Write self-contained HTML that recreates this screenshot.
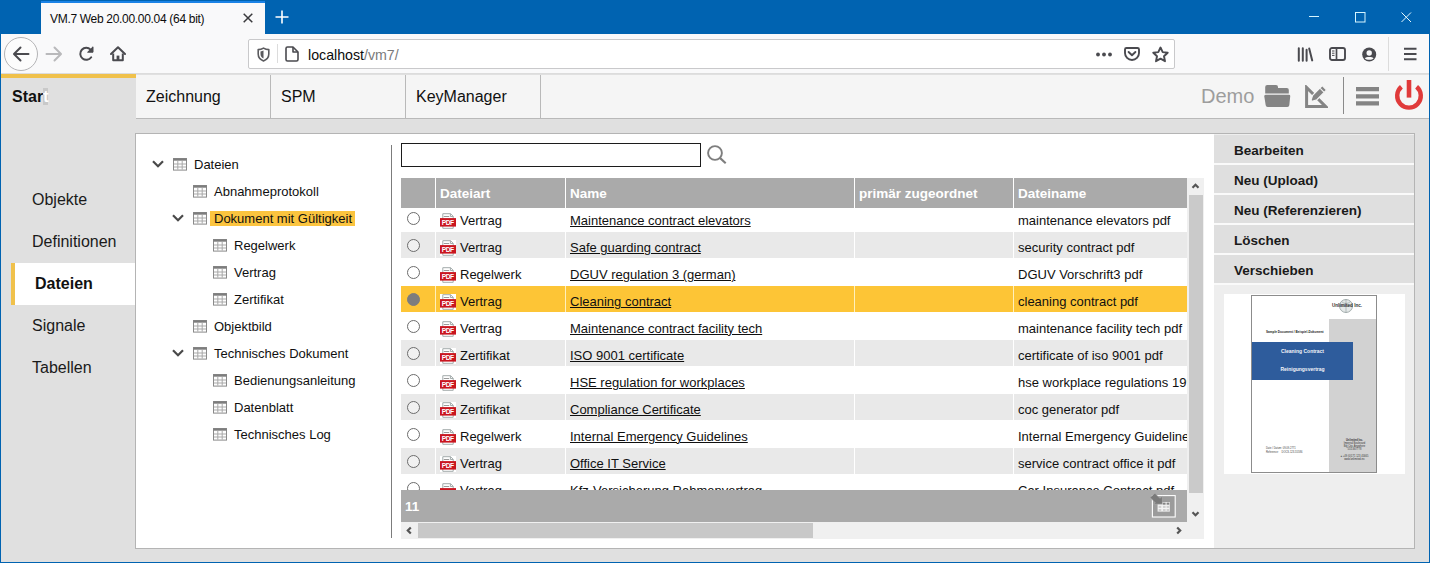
<!DOCTYPE html>
<html lang="de">
<head>
<meta charset="utf-8">
<title>VM.7 Web 20.00.00.04 (64 bit)</title>
<style>
*{box-sizing:border-box;margin:0;padding:0}
html,body{width:1430px;height:563px;overflow:hidden;background:#e0e0e0;font-family:"Liberation Sans",sans-serif;color:#111}
.abs{position:absolute}
svg{display:block}
#win{position:absolute;left:0;top:0;width:1430px;height:563px;background:#e0e0e0;overflow:hidden}
/* browser chrome */
#titlebar{position:absolute;left:0;top:0;width:1430px;height:34px;background:#0063b1}
#btab{position:absolute;left:41px;top:1px;width:224px;height:33px;background:#f9f9fa;border-top:2px solid #1b83e6}
#btab .t{position:absolute;left:9px;top:8px;font-size:12px;line-height:16px;color:#0c0c0d;white-space:nowrap;letter-spacing:-0.31px}
#navbar{position:absolute;left:1px;top:33.500px;width:1428px;height:40.500px;background:#f9f9fa;border-bottom:1px solid #dcdcdc}
#urlbar{position:absolute;left:248px;top:39px;width:927px;height:30px;background:#fff;border:1px solid #c9c9cb;border-radius:2px}
#urlbar .u{position:absolute;left:59px;top:7px;font-size:14.2px;line-height:16px;color:#0c0c0d;white-space:nowrap}
#urlbar .u span{color:#7a7a7b}
#backc{position:absolute;left:4px;top:37px;width:34px;height:34px;border-radius:50%;border:1px solid #b4b4b6;background:#fcfcfc}
/* app */
#apphead{position:absolute;left:1px;top:75px;width:1428px;height:44px;background:#f5f5f5;border-bottom:1px solid #b9b9b9}
.mtab{position:absolute;top:0;height:43px;width:136px;border-right:1px solid #b9b9b9;font-size:16px;line-height:43px;padding-left:11px;color:#111}
#start{position:absolute;left:1px;top:74px;width:135px;height:60px;background:#e0e0e0;border-top:4px solid #f0c14b;font-size:16px;font-weight:bold;padding-left:11px;line-height:37px}
#start i{font-style:normal;color:#fff;background:#c9c9c9}
#demo{position:absolute;left:1201px;top:84px;font-size:20px;line-height:24px;color:#9d9d9d}
#side .it{position:absolute;left:32px;font-size:16px;line-height:20px;color:#1a1a1a;white-space:nowrap}
#sel{position:absolute;left:11px;top:263px;width:125px;height:42px;background:#fff;border-left:4px solid #f0c14b}
#panel{position:absolute;left:135px;top:133px;width:1280px;height:416px;background:#fff;border:1px solid #b4b4b4}
.tr{position:absolute;font-size:13px;line-height:18px;white-space:nowrap;color:#101010}
#vsep{position:absolute;left:391px;top:145px;width:1px;height:393px;background:#7c7c7c}
#search{position:absolute;left:401px;top:143px;width:300px;height:24px;border:1px solid #1c1c1c;background:#fff}
/* table */
#grid{position:absolute;left:401px;top:178px;width:786px;height:313px;overflow:hidden;background:#fff}
#ghead{position:absolute;left:0;top:0;width:786px;height:30px;background:#aaa;z-index:2}
#ghead div{position:absolute;top:0;height:30px;border-left:1px solid #fff;color:#fff;font-weight:bold;font-size:13.5px;line-height:32px;padding-left:4px;white-space:nowrap}
.row{position:absolute;left:0;width:786px;height:26px;background:#fff;font-size:13px;color:#101010}
.row.alt{background:#e9e9e9}
.row.selr{background:#fdc536}
.c{position:absolute;top:0;height:26px;line-height:32px;white-space:nowrap;overflow:hidden;border-left:1px solid #fff;padding-left:4px}
.c0{left:0;width:34px;border-left:0}
.c1{left:34px;width:130px}
.c2{left:164px;width:289px}
.c3{left:453px;width:159px}
.c4{left:612px;width:174px}
.c u{text-decoration:underline;text-decoration-thickness:1px;text-underline-offset:0.7px}
.pdf{position:absolute;left:4px;top:8px}
.ta{position:absolute;left:24px;top:0}
.rad{position:absolute;left:6px;top:7px;width:13px;height:13px;border-radius:50%;border:1.8px solid #6c6c6c;background:#fff}
.alt .rad{background:#f1f1f1}
.rad.on{background:#7d7d7d;border-color:#7d7d7d}
.selr .c{border-left-color:#fff0bd}
#gfoot{position:absolute;left:401px;top:490px;width:786px;height:32px;background:#aaa;color:#fff;font-weight:bold;font-size:13.5px;line-height:34px;padding-left:4px}
#vscroll{position:absolute;left:1187px;top:178px;width:17px;height:361px;background:#f0f0f0}
#vthumb{position:absolute;left:1.5px;top:17px;width:14.5px;height:298px;background:#cacaca}
#hscroll{position:absolute;left:401px;top:522px;width:786px;height:17px;background:#f0f0f0}
#hthumb{position:absolute;left:17px;top:1px;width:395px;height:15px;background:#c8c8c8}
/* right */
#rp{position:absolute;left:1214px;top:134px;width:200px;height:414px;background:#eee}
.btn{position:absolute;left:0;width:200px;height:28px;background:#dfdfdf;font-size:13.5px;font-weight:bold;line-height:31px;padding-left:20px;color:#1a1a1a;white-space:nowrap}
.gap{position:absolute;left:0;width:200px;height:2px;background:#fafafa}
#prev{position:absolute;left:10px;top:160px;width:181px;height:180px;background:#fff}
#doc{position:absolute;left:27px;top:0.5px;width:126px;height:178.500px;border:1px solid #8c8c8c;background:#fff;overflow:hidden;font-family:"Liberation Sans",sans-serif}
#doc div{position:absolute;white-space:nowrap}
</style>
</head>
<body>
<div id="win">
  <div id="titlebar">
    <svg class="abs" style="left:275px;top:10px" width="14" height="14" viewBox="0 0 14 14"><path d="M7 0.5V13.5M0.5 7H13.5" stroke="#fff" stroke-width="1.6" fill="none"/></svg>
    <svg class="abs" style="left:1309px;top:16px" width="11" height="2" viewBox="0 0 11 2"><path d="M0 0.5H10" stroke="#d5f5ff" stroke-width="1"/></svg>
    <svg class="abs" style="left:1355px;top:12px" width="11" height="11" viewBox="0 0 11 11"><rect x="0.5" y="0.5" width="9.5" height="9.5" fill="none" stroke="#d5f5ff" stroke-width="1"/></svg>
    <svg class="abs" style="left:1401px;top:12px" width="11" height="11" viewBox="0 0 11 11"><path d="M0.5 0.5L10 10M10 0.5L0.5 10" fill="none" stroke="#e6faff" stroke-width="1"/></svg>
  </div>
  <div id="btab"><div class="t">VM.7 Web 20.00.00.04 (64 bit)</div>
    <svg class="abs" style="left:202px;top:10px" width="10" height="10" viewBox="0 0 10 10"><path d="M0.7 0.7L9.3 9.3M9.3 0.7L0.7 9.3" stroke="#3a3a3d" stroke-width="1.5" fill="none"/></svg>
  </div>
  <div id="navbar"></div>
  <div id="backc"></div>
  <!-- back -->
  <svg class="abs" style="left:12px;top:46px" width="18" height="16" viewBox="0 0 18 16"><path d="M16.5 8H2.5M8.5 1.5L2 8L8.5 14.5" fill="none" stroke="#4a4a4f" stroke-width="2" stroke-linecap="round" stroke-linejoin="round"/></svg>
  <!-- forward -->
  <svg class="abs" style="left:45px;top:46px" width="18" height="16" viewBox="0 0 18 16"><path d="M1.5 8H15.5M9.5 1.5L16 8L9.5 14.5" fill="none" stroke="#b9b9bb" stroke-width="2" stroke-linecap="round" stroke-linejoin="round"/></svg>
  <!-- reload -->
  <svg class="abs" style="left:78px;top:46px" width="17" height="16" viewBox="0 0 17 16"><path d="M13.2 11.2A6 6 0 1 1 12.6 3.6" fill="none" stroke="#4a4a4f" stroke-width="2" stroke-linecap="round"/><path d="M15 0.8V6.2H9.6Z" fill="#4a4a4f" stroke="#4a4a4f" stroke-width="1" stroke-linejoin="round"/></svg>
  <!-- home -->
  <svg class="abs" style="left:110px;top:46px" width="16" height="16" viewBox="0 0 16 16"><path d="M1 8L8 1.2L15 8" fill="none" stroke="#4a4a4f" stroke-width="2" stroke-linecap="round" stroke-linejoin="round"/><path d="M3.2 7.5V14.2H12.8V7.5" fill="none" stroke="#4a4a4f" stroke-width="2" stroke-linejoin="round"/><rect x="6.6" y="9.6" width="2.8" height="4.4" fill="#4a4a4f"/></svg>
  <div id="urlbar"><div class="u">localhost<span>/vm7/</span></div>
    <!-- shield -->
    <svg class="abs" style="left:8px;top:7px" width="13" height="15" viewBox="0 0 13 15"><path d="M1.200 2.600C3.600 2.600 5.200 1.900 6.500 1.100C7.800 1.900 9.400 2.600 11.800 2.600V7C11.800 10.400 9.400 12.800 6.500 13.900C3.600 12.800 1.200 10.400 1.200 7Z" fill="none" stroke="#5a5a5e" stroke-width="1.600" stroke-linejoin="round"/><path d="M6.500 3.600V11.600C4.600 10.700 3.500 9.100 3.500 7V4.500C4.700 4.400 5.700 4.100 6.500 3.600Z" fill="#5a5a5e"/></svg>
    <div class="abs" style="left:28px;top:4px;width:1px;height:19px;background:#dcdcdc"></div>
    <!-- page -->
    <svg class="abs" style="left:36px;top:6px" width="14" height="16" viewBox="0 0 14 16"><path d="M2.5 1H8L13 6V13.5A1.5 1.5 0 0 1 11.5 15H2.5A1.5 1.5 0 0 1 1 13.5V2.5A1.5 1.5 0 0 1 2.500 1Z" fill="none" stroke="#4a4a4f" stroke-width="1.6" stroke-linejoin="round"/><path d="M8 1V6H13" fill="none" stroke="#4a4a4f" stroke-width="1.6" stroke-linejoin="round"/></svg>
    <!-- dots -->
    <svg class="abs" style="left:847px;top:11.500px" width="16" height="5" viewBox="0 0 16 5"><circle cx="2" cy="2.500" r="1.900" fill="#4a4a4f"/><circle cx="8" cy="2.500" r="1.900" fill="#4a4a4f"/><circle cx="14" cy="2.500" r="1.900" fill="#4a4a4f"/></svg>
    <!-- pocket -->
    <svg class="abs" style="left:875px;top:7px" width="16" height="14" viewBox="0 0 16 14"><path d="M2.500 1H13.500A1.500 1.500 0 0 1 15 2.500V6A7 7 0 0 1 1 6V2.500A1.500 1.500 0 0 1 2.500 1Z" fill="none" stroke="#4a4a4f" stroke-width="1.900"/><path d="M4.600 5L8 8.300L11.400 5" fill="none" stroke="#4a4a4f" stroke-width="1.900" stroke-linecap="round" stroke-linejoin="round"/></svg>
    <!-- star -->
    <svg class="abs" style="left:902.500px;top:5.500px" width="17" height="17" viewBox="0 0 17 17"><path d="M8.500 1.500L10.700 6.100L15.700 6.700L12 10.200L13 15.200L8.500 12.700L4 15.200L5 10.200L1.300 6.700L6.300 6.100Z" fill="none" stroke="#4a4a4f" stroke-width="1.900" stroke-linejoin="round"/></svg>
  </div>
  <!-- library -->
  <svg class="abs" style="left:1297px;top:47px" width="17" height="15" viewBox="0 0 17 15"><path d="M1.800 1.200V13.800M5.800 1.200V13.800M9.600 2.800V13.800M12.200 1.400L15.200 13.400" fill="none" stroke="#4a4a4f" stroke-width="2" stroke-linecap="round"/></svg>
  <!-- sidebar -->
  <svg class="abs" style="left:1329px;top:47px" width="17" height="14" viewBox="0 0 17 14"><rect x="1" y="1" width="15" height="12" rx="2" fill="none" stroke="#4a4a4f" stroke-width="1.900"/><path d="M7.500 1V13" stroke="#4a4a4f" stroke-width="1.700"/><path d="M3 4H5.500M3 6.200H5.500M3 8.400H5.500" stroke="#4a4a4f" stroke-width="1"/></svg>
  <!-- account -->
  <svg class="abs" style="left:1362px;top:47px" width="15" height="15" viewBox="0 0 15 15"><circle cx="7.200" cy="7.500" r="7" fill="#4a4a4f"/><circle cx="7.200" cy="6" r="2.700" fill="#f9f9fa"/><path d="M2.800 11.300C4 9.500 10.400 9.500 11.600 11.300C10 13.300 4.400 13.300 2.800 11.300Z" fill="#f9f9fa"/></svg>
  <div class="abs" style="left:1388px;top:37px;width:1px;height:34px;background:#dcdcdc"></div>
  <!-- browser hamburger -->
  <svg class="abs" style="left:1404px;top:47px" width="13" height="14" viewBox="0 0 13 14"><path d="M0 1.700H12.500M0 7H12.500M0 12.200H12.500" stroke="#4a4a4f" stroke-width="2"/></svg>

  <div id="apphead">
    <div class="mtab" style="left:134px">Zeichnung</div>
    <div class="mtab" style="left:269px">SPM</div>
    <div class="mtab" style="left:404px">KeyManager</div>
  </div>
  <div id="start">Star<i>t</i></div>
  <div id="demo">Demo</div>
  <!-- folder -->
  <svg class="abs" style="left:1264px;top:85px" width="27" height="23" viewBox="0 0 27 23"><path d="M1.200 2A2 2 0 0 1 3.200 0H12A2 2 0 0 1 14 2V3H22.800A2 2 0 0 1 24.800 5V8.600H1.200Z" fill="#848484"/><path d="M1.600 9.800H24.800A1.500 1.500 0 0 1 26.200 11.600L25.300 20.200A2 2 0 0 1 23.300 22H3.700A2 2 0 0 1 1.700 20.200L0.300 11.600A1.500 1.500 0 0 1 1.600 9.800Z" fill="#848484"/></svg>
  <!-- edit/measure -->
  <svg class="abs" style="left:1305px;top:85px" width="23" height="23" viewBox="0 0 23 23"><path d="M1.600 2.500V21.400H20.500Z" fill="none" stroke="#848484" stroke-width="3" stroke-linejoin="miter"/><path d="M6 15.200L7.600 10.400L17.300 0.700L21.600 5L11.900 14.700L7.100 16.300Z" fill="#848484" stroke="#f5f5f5" stroke-width="1.200"/><path d="M15.200 3.400L18.900 7.100" stroke="#f5f5f5" stroke-width="1.100"/></svg>
  <div class="abs" style="left:1343px;top:77px;width:1px;height:37px;background:#8a8a8a"></div>
  <!-- app hamburger -->
  <svg class="abs" style="left:1356px;top:87px" width="23" height="19" viewBox="0 0 23 19"><path d="M0 2.200H23M0 9.300H23M0 16.400H23" stroke="#848484" stroke-width="4.200"/></svg>
  <!-- power -->
  <svg class="abs" style="left:1394px;top:79px" width="30" height="32" viewBox="0 0 30 32"><path d="M7.400 7.800A11.800 11.800 0 1 0 22.600 7.800" fill="none" stroke="#e03a3a" stroke-width="4.400" stroke-linecap="butt"/><path d="M15 1V18.600" stroke="#e03a3a" stroke-width="4.600"/></svg>

  <div id="side">
    <div class="it" style="top:190px">Objekte</div>
    <div class="it" style="top:232px">Definitionen</div>
    <div id="sel"></div>
    <div class="it" style="top:274px;left:35px;font-weight:bold;color:#111">Dateien</div>
    <div class="it" style="top:316px">Signale</div>
    <div class="it" style="top:358px">Tabellen</div>
  </div>
  <div id="panel"></div>
<div class="abs" style="left:152px;top:160px"><svg class="ch" width="12" height="8" viewBox="0 0 12 8"><path d="M1 1.2L6 6.2L11 1.2" fill="none" stroke="#4a4a4a" stroke-width="2.200"/></svg></div><div class="abs" style="left:172.5px;top:157.5px"><svg class="ti" width="14" height="13" viewBox="0 0 14 13"><rect x="0.500" y="0.500" width="13" height="11.600" fill="#fdfdfd" stroke="#8a8a8a"/><rect x="0.500" y="0.500" width="13" height="2.200" fill="#7d7d7d"/><path d="M1 6H13M1 9H13M4.800 3V11.600M9.200 3V11.600" stroke="#a9a9a9" stroke-width="1" fill="none"/></svg></div><div class="tr" style="left:194px;top:155.5px">Dateien</div>
<div class="abs" style="left:192.5px;top:184.5px"><svg class="ti" width="14" height="13" viewBox="0 0 14 13"><rect x="0.500" y="0.500" width="13" height="11.600" fill="#fdfdfd" stroke="#8a8a8a"/><rect x="0.500" y="0.500" width="13" height="2.200" fill="#7d7d7d"/><path d="M1 6H13M1 9H13M4.800 3V11.600M9.200 3V11.600" stroke="#a9a9a9" stroke-width="1" fill="none"/></svg></div><div class="tr" style="left:214px;top:182.5px">Abnahmeprotokoll</div>
<div class="abs" style="left:172px;top:214px"><svg class="ch" width="12" height="8" viewBox="0 0 12 8"><path d="M1 1.2L6 6.2L11 1.2" fill="none" stroke="#4a4a4a" stroke-width="2.200"/></svg></div><div class="abs" style="left:192.5px;top:211.5px"><svg class="ti" width="14" height="13" viewBox="0 0 14 13"><rect x="0.500" y="0.500" width="13" height="11.600" fill="#fdfdfd" stroke="#8a8a8a"/><rect x="0.500" y="0.500" width="13" height="2.200" fill="#7d7d7d"/><path d="M1 6H13M1 9H13M4.800 3V11.600M9.200 3V11.600" stroke="#a9a9a9" stroke-width="1" fill="none"/></svg></div><div class="abs" style="left:210px;top:211px;width:145px;height:15px;background:#fbc43f"></div><div class="tr" style="left:214px;top:209.5px">Dokument mit Gültigkeit</div>
<div class="abs" style="left:212.5px;top:238.5px"><svg class="ti" width="14" height="13" viewBox="0 0 14 13"><rect x="0.500" y="0.500" width="13" height="11.600" fill="#fdfdfd" stroke="#8a8a8a"/><rect x="0.500" y="0.500" width="13" height="2.200" fill="#7d7d7d"/><path d="M1 6H13M1 9H13M4.800 3V11.600M9.200 3V11.600" stroke="#a9a9a9" stroke-width="1" fill="none"/></svg></div><div class="tr" style="left:234px;top:236.5px">Regelwerk</div>
<div class="abs" style="left:212.5px;top:265.5px"><svg class="ti" width="14" height="13" viewBox="0 0 14 13"><rect x="0.500" y="0.500" width="13" height="11.600" fill="#fdfdfd" stroke="#8a8a8a"/><rect x="0.500" y="0.500" width="13" height="2.200" fill="#7d7d7d"/><path d="M1 6H13M1 9H13M4.800 3V11.600M9.200 3V11.600" stroke="#a9a9a9" stroke-width="1" fill="none"/></svg></div><div class="tr" style="left:234px;top:263.5px">Vertrag</div>
<div class="abs" style="left:212.5px;top:292.5px"><svg class="ti" width="14" height="13" viewBox="0 0 14 13"><rect x="0.500" y="0.500" width="13" height="11.600" fill="#fdfdfd" stroke="#8a8a8a"/><rect x="0.500" y="0.500" width="13" height="2.200" fill="#7d7d7d"/><path d="M1 6H13M1 9H13M4.800 3V11.600M9.200 3V11.600" stroke="#a9a9a9" stroke-width="1" fill="none"/></svg></div><div class="tr" style="left:234px;top:290.5px">Zertifikat</div>
<div class="abs" style="left:192.5px;top:319.5px"><svg class="ti" width="14" height="13" viewBox="0 0 14 13"><rect x="0.500" y="0.500" width="13" height="11.600" fill="#fdfdfd" stroke="#8a8a8a"/><rect x="0.500" y="0.500" width="13" height="2.200" fill="#7d7d7d"/><path d="M1 6H13M1 9H13M4.800 3V11.600M9.200 3V11.600" stroke="#a9a9a9" stroke-width="1" fill="none"/></svg></div><div class="tr" style="left:214px;top:317.5px">Objektbild</div>
<div class="abs" style="left:172px;top:349px"><svg class="ch" width="12" height="8" viewBox="0 0 12 8"><path d="M1 1.2L6 6.2L11 1.2" fill="none" stroke="#4a4a4a" stroke-width="2.200"/></svg></div><div class="abs" style="left:192.5px;top:346.5px"><svg class="ti" width="14" height="13" viewBox="0 0 14 13"><rect x="0.500" y="0.500" width="13" height="11.600" fill="#fdfdfd" stroke="#8a8a8a"/><rect x="0.500" y="0.500" width="13" height="2.200" fill="#7d7d7d"/><path d="M1 6H13M1 9H13M4.800 3V11.600M9.200 3V11.600" stroke="#a9a9a9" stroke-width="1" fill="none"/></svg></div><div class="tr" style="left:214px;top:344.5px">Technisches Dokument</div>
<div class="abs" style="left:212.5px;top:373.5px"><svg class="ti" width="14" height="13" viewBox="0 0 14 13"><rect x="0.500" y="0.500" width="13" height="11.600" fill="#fdfdfd" stroke="#8a8a8a"/><rect x="0.500" y="0.500" width="13" height="2.200" fill="#7d7d7d"/><path d="M1 6H13M1 9H13M4.800 3V11.600M9.200 3V11.600" stroke="#a9a9a9" stroke-width="1" fill="none"/></svg></div><div class="tr" style="left:234px;top:371.5px">Bedienungsanleitung</div>
<div class="abs" style="left:212.5px;top:400.5px"><svg class="ti" width="14" height="13" viewBox="0 0 14 13"><rect x="0.500" y="0.500" width="13" height="11.600" fill="#fdfdfd" stroke="#8a8a8a"/><rect x="0.500" y="0.500" width="13" height="2.200" fill="#7d7d7d"/><path d="M1 6H13M1 9H13M4.800 3V11.600M9.200 3V11.600" stroke="#a9a9a9" stroke-width="1" fill="none"/></svg></div><div class="tr" style="left:234px;top:398.5px">Datenblatt</div>
<div class="abs" style="left:212.5px;top:427.5px"><svg class="ti" width="14" height="13" viewBox="0 0 14 13"><rect x="0.500" y="0.500" width="13" height="11.600" fill="#fdfdfd" stroke="#8a8a8a"/><rect x="0.500" y="0.500" width="13" height="2.200" fill="#7d7d7d"/><path d="M1 6H13M1 9H13M4.800 3V11.600M9.200 3V11.600" stroke="#a9a9a9" stroke-width="1" fill="none"/></svg></div><div class="tr" style="left:234px;top:425.5px">Technisches Log</div>
  <div id="vsep"></div>
  <div id="search"></div>
  <svg class="abs" style="left:706px;top:145px" width="22" height="22" viewBox="0 0 22 22"><circle cx="9" cy="8" r="6.900" fill="none" stroke="#7e7e7e" stroke-width="1.900"/><path d="M13.900 12.900L19.700 18.200" stroke="#7e7e7e" stroke-width="2.100"/></svg>
  <div id="grid">
    <div id="ghead">
      <div style="left:0;width:34px;border-left:0"></div>
      <div style="left:34px;width:130px">Dateiart</div>
      <div style="left:164px;width:289px">Name</div>
      <div style="left:453px;width:159px">primär zugeordnet</div>
      <div style="left:612px;width:174px">Dateiname</div>
    </div>
<div class="row" style="top:27px"><div class="c c0"><span class="rad"></span></div><div class="c c1"><svg class="pdf" width="16" height="16" viewBox="0 0 16 16"><rect width="16" height="16" fill="#fff"/><path d="M2.800 0.700H10.600L13.200 3.300V15.300H2.800Z" fill="#fff" stroke="#a3abab"/><path d="M10.400 0.700V3.500H13.200" fill="none" stroke="#a3abab"/><path d="M3.800 3.500H9.200" stroke="#8e8e8e" stroke-width="0.900"/><rect x="0" y="5.100" width="16" height="8.500" fill="#c9151f"/><text x="8" y="12" font-family="Liberation Sans, sans-serif" font-weight="bold" font-size="6.700" fill="#fff" text-anchor="middle" textLength="12.400">PDF</text></svg><span class="ta">Vertrag</span></div><div class="c c2"><u>Maintenance contract elevators</u></div><div class="c c3"></div><div class="c c4">maintenance elevators pdf</div></div>
<div class="row alt" style="top:54px"><div class="c c0"><span class="rad"></span></div><div class="c c1"><svg class="pdf" width="16" height="16" viewBox="0 0 16 16"><rect width="16" height="16" fill="#fff"/><path d="M2.800 0.700H10.600L13.200 3.300V15.300H2.800Z" fill="#fff" stroke="#a3abab"/><path d="M10.400 0.700V3.500H13.200" fill="none" stroke="#a3abab"/><path d="M3.800 3.500H9.200" stroke="#8e8e8e" stroke-width="0.900"/><rect x="0" y="5.100" width="16" height="8.500" fill="#c9151f"/><text x="8" y="12" font-family="Liberation Sans, sans-serif" font-weight="bold" font-size="6.700" fill="#fff" text-anchor="middle" textLength="12.400">PDF</text></svg><span class="ta">Vertrag</span></div><div class="c c2"><u>Safe guarding contract</u></div><div class="c c3"></div><div class="c c4">security contract pdf</div></div>
<div class="row" style="top:81px"><div class="c c0"><span class="rad"></span></div><div class="c c1"><svg class="pdf" width="16" height="16" viewBox="0 0 16 16"><rect width="16" height="16" fill="#fff"/><path d="M2.800 0.700H10.600L13.200 3.300V15.300H2.800Z" fill="#fff" stroke="#a3abab"/><path d="M10.400 0.700V3.500H13.200" fill="none" stroke="#a3abab"/><path d="M3.800 3.500H9.200" stroke="#8e8e8e" stroke-width="0.900"/><rect x="0" y="5.100" width="16" height="8.500" fill="#c9151f"/><text x="8" y="12" font-family="Liberation Sans, sans-serif" font-weight="bold" font-size="6.700" fill="#fff" text-anchor="middle" textLength="12.400">PDF</text></svg><span class="ta">Regelwerk</span></div><div class="c c2"><u>DGUV regulation 3 (german)</u></div><div class="c c3"></div><div class="c c4">DGUV Vorschrift3 pdf</div></div>
<div class="row alt selr" style="top:108px"><div class="c c0"><span class="rad on"></span></div><div class="c c1"><svg class="pdf" width="16" height="16" viewBox="0 0 16 16"><rect width="16" height="16" fill="#fff"/><path d="M2.800 0.700H10.600L13.200 3.300V15.300H2.800Z" fill="#fff" stroke="#a3abab"/><path d="M10.400 0.700V3.500H13.200" fill="none" stroke="#a3abab"/><path d="M3.800 3.500H9.200" stroke="#8e8e8e" stroke-width="0.900"/><rect x="0" y="5.100" width="16" height="8.500" fill="#c9151f"/><text x="8" y="12" font-family="Liberation Sans, sans-serif" font-weight="bold" font-size="6.700" fill="#fff" text-anchor="middle" textLength="12.400">PDF</text></svg><span class="ta">Vertrag</span></div><div class="c c2"><u>Cleaning contract</u></div><div class="c c3"></div><div class="c c4">cleaning contract pdf</div></div>
<div class="row" style="top:135px"><div class="c c0"><span class="rad"></span></div><div class="c c1"><svg class="pdf" width="16" height="16" viewBox="0 0 16 16"><rect width="16" height="16" fill="#fff"/><path d="M2.800 0.700H10.600L13.200 3.300V15.300H2.800Z" fill="#fff" stroke="#a3abab"/><path d="M10.400 0.700V3.500H13.200" fill="none" stroke="#a3abab"/><path d="M3.800 3.500H9.200" stroke="#8e8e8e" stroke-width="0.900"/><rect x="0" y="5.100" width="16" height="8.500" fill="#c9151f"/><text x="8" y="12" font-family="Liberation Sans, sans-serif" font-weight="bold" font-size="6.700" fill="#fff" text-anchor="middle" textLength="12.400">PDF</text></svg><span class="ta">Vertrag</span></div><div class="c c2"><u>Maintenance contract facility tech</u></div><div class="c c3"></div><div class="c c4">maintenance facility tech pdf</div></div>
<div class="row alt" style="top:162px"><div class="c c0"><span class="rad"></span></div><div class="c c1"><svg class="pdf" width="16" height="16" viewBox="0 0 16 16"><rect width="16" height="16" fill="#fff"/><path d="M2.800 0.700H10.600L13.200 3.300V15.300H2.800Z" fill="#fff" stroke="#a3abab"/><path d="M10.400 0.700V3.500H13.200" fill="none" stroke="#a3abab"/><path d="M3.800 3.500H9.200" stroke="#8e8e8e" stroke-width="0.900"/><rect x="0" y="5.100" width="16" height="8.500" fill="#c9151f"/><text x="8" y="12" font-family="Liberation Sans, sans-serif" font-weight="bold" font-size="6.700" fill="#fff" text-anchor="middle" textLength="12.400">PDF</text></svg><span class="ta">Zertifikat</span></div><div class="c c2"><u>ISO 9001 certificate</u></div><div class="c c3"></div><div class="c c4">certificate of iso 9001 pdf</div></div>
<div class="row" style="top:189px"><div class="c c0"><span class="rad"></span></div><div class="c c1"><svg class="pdf" width="16" height="16" viewBox="0 0 16 16"><rect width="16" height="16" fill="#fff"/><path d="M2.800 0.700H10.600L13.200 3.300V15.300H2.800Z" fill="#fff" stroke="#a3abab"/><path d="M10.400 0.700V3.500H13.200" fill="none" stroke="#a3abab"/><path d="M3.800 3.500H9.200" stroke="#8e8e8e" stroke-width="0.900"/><rect x="0" y="5.100" width="16" height="8.500" fill="#c9151f"/><text x="8" y="12" font-family="Liberation Sans, sans-serif" font-weight="bold" font-size="6.700" fill="#fff" text-anchor="middle" textLength="12.400">PDF</text></svg><span class="ta">Regelwerk</span></div><div class="c c2"><u>HSE regulation for workplaces</u></div><div class="c c3"></div><div class="c c4">hse workplace regulations 1996 pdf</div></div>
<div class="row alt" style="top:216px"><div class="c c0"><span class="rad"></span></div><div class="c c1"><svg class="pdf" width="16" height="16" viewBox="0 0 16 16"><rect width="16" height="16" fill="#fff"/><path d="M2.800 0.700H10.600L13.200 3.300V15.300H2.800Z" fill="#fff" stroke="#a3abab"/><path d="M10.400 0.700V3.500H13.200" fill="none" stroke="#a3abab"/><path d="M3.800 3.500H9.200" stroke="#8e8e8e" stroke-width="0.900"/><rect x="0" y="5.100" width="16" height="8.500" fill="#c9151f"/><text x="8" y="12" font-family="Liberation Sans, sans-serif" font-weight="bold" font-size="6.700" fill="#fff" text-anchor="middle" textLength="12.400">PDF</text></svg><span class="ta">Zertifikat</span></div><div class="c c2"><u>Compliance Certificate</u></div><div class="c c3"></div><div class="c c4">coc generator pdf</div></div>
<div class="row" style="top:243px"><div class="c c0"><span class="rad"></span></div><div class="c c1"><svg class="pdf" width="16" height="16" viewBox="0 0 16 16"><rect width="16" height="16" fill="#fff"/><path d="M2.800 0.700H10.600L13.200 3.300V15.300H2.800Z" fill="#fff" stroke="#a3abab"/><path d="M10.400 0.700V3.500H13.200" fill="none" stroke="#a3abab"/><path d="M3.800 3.500H9.200" stroke="#8e8e8e" stroke-width="0.900"/><rect x="0" y="5.100" width="16" height="8.500" fill="#c9151f"/><text x="8" y="12" font-family="Liberation Sans, sans-serif" font-weight="bold" font-size="6.700" fill="#fff" text-anchor="middle" textLength="12.400">PDF</text></svg><span class="ta">Regelwerk</span></div><div class="c c2"><u>Internal Emergency Guidelines</u></div><div class="c c3"></div><div class="c c4">Internal Emergency Guidelines pdf</div></div>
<div class="row alt" style="top:270px"><div class="c c0"><span class="rad"></span></div><div class="c c1"><svg class="pdf" width="16" height="16" viewBox="0 0 16 16"><rect width="16" height="16" fill="#fff"/><path d="M2.800 0.700H10.600L13.200 3.300V15.300H2.800Z" fill="#fff" stroke="#a3abab"/><path d="M10.400 0.700V3.500H13.200" fill="none" stroke="#a3abab"/><path d="M3.800 3.500H9.200" stroke="#8e8e8e" stroke-width="0.900"/><rect x="0" y="5.100" width="16" height="8.500" fill="#c9151f"/><text x="8" y="12" font-family="Liberation Sans, sans-serif" font-weight="bold" font-size="6.700" fill="#fff" text-anchor="middle" textLength="12.400">PDF</text></svg><span class="ta">Vertrag</span></div><div class="c c2"><u>Office IT Service</u></div><div class="c c3"></div><div class="c c4">service contract office it pdf</div></div>
<div class="row" style="top:297px"><div class="c c0"><span class="rad"></span></div><div class="c c1"><svg class="pdf" width="16" height="16" viewBox="0 0 16 16"><rect width="16" height="16" fill="#fff"/><path d="M2.800 0.700H10.600L13.200 3.300V15.300H2.800Z" fill="#fff" stroke="#a3abab"/><path d="M10.400 0.700V3.500H13.200" fill="none" stroke="#a3abab"/><path d="M3.800 3.500H9.200" stroke="#8e8e8e" stroke-width="0.900"/><rect x="0" y="5.100" width="16" height="8.500" fill="#c9151f"/><text x="8" y="12" font-family="Liberation Sans, sans-serif" font-weight="bold" font-size="6.700" fill="#fff" text-anchor="middle" textLength="12.400">PDF</text></svg><span class="ta">Vertrag</span></div><div class="c c2"><u>Kfz-Versicherung Rahmenvertrag</u></div><div class="c c3"></div><div class="c c4">Car Insurance Contract pdf</div></div>
  </div>
  <div id="gfoot">11
    <svg class="abs" style="left:749px;top:3px" width="28" height="26" viewBox="0 0 28 26"><rect x="2.400" y="2.600" width="22.800" height="21.400" fill="#9b9b9b" stroke="#fff" stroke-width="1.100"/><rect x="7.600" y="9" width="12.200" height="9.600" fill="#f4f4f4"/><rect x="12.900" y="9.600" width="2.700" height="2.100" fill="#858585"/><rect x="16.600" y="9.600" width="2.700" height="2.100" fill="#858585"/><rect x="8.6" y="12.8" width="2.700" height="2.100" fill="#cfcfcf"/><rect x="8.6" y="16.0" width="2.700" height="2.100" fill="#cfcfcf"/><rect x="12.9" y="12.8" width="2.700" height="2.100" fill="#cfcfcf"/><rect x="12.9" y="16.0" width="2.700" height="2.100" fill="#cfcfcf"/><rect x="16.6" y="12.8" width="2.700" height="2.100" fill="#cfcfcf"/><rect x="16.6" y="16.0" width="2.700" height="2.100" fill="#cfcfcf"/><path d="M0.100 4.600L4.900 0.300L9.850 5.250L12.400 3.200V11.200H3.300L5.300 9.800Z" fill="#7a7a7a" stroke="#b4b4b4" stroke-width="0.500"/></svg>
  </div>
  <div id="vscroll"><div id="vthumb"></div>
    <svg class="abs" style="left:4px;top:5px" width="9" height="6" viewBox="0 0 9 6"><path d="M1.500 4.800L4.500 1.800L7.500 4.800" fill="none" stroke="#555" stroke-width="2.200"/></svg>
    <svg class="abs" style="left:4px;top:333px" width="9" height="6" viewBox="0 0 9 6"><path d="M1.500 1.200L4.500 4.200L7.500 1.200" fill="none" stroke="#555" stroke-width="2.200"/></svg>
  </div>
  <div id="hscroll"><div id="hthumb"></div>
    <svg class="abs" style="left:5px;top:4px" width="6" height="9" viewBox="0 0 6 9"><path d="M4.800 1.500L1.800 4.500L4.800 7.500" fill="none" stroke="#555" stroke-width="2.200"/></svg>
    <svg class="abs" style="left:775px;top:4px" width="6" height="9" viewBox="0 0 6 9"><path d="M1.200 1.500L4.200 4.500L1.200 7.500" fill="none" stroke="#555" stroke-width="2.200"/></svg>
  </div>

  <div id="rp">
    <div class="btn" style="top:1px">Bearbeiten</div><div class="gap" style="top:29px"></div>
    <div class="btn" style="top:31px">Neu (Upload)</div><div class="gap" style="top:59px"></div>
    <div class="btn" style="top:61px">Neu (Referenzieren)</div><div class="gap" style="top:89px"></div>
    <div class="btn" style="top:91px">Löschen</div><div class="gap" style="top:119px"></div>
    <div class="btn" style="top:121px">Verschieben</div><div class="gap" style="top:149px"></div>
    <div id="prev">
      <div id="doc">
        <div style="left:76.500px;top:23.500px;width:51px;height:160px;background:#d2d2d2"></div>
        <div style="left:0;top:46px;width:101px;height:38.500px;background:#2e5c9c"></div>
        <div style="left:0;top:52.500px;width:101px;text-align:center;color:#f1f4f9;font-size:5px;line-height:6px;font-weight:bold">Cleaning Contract</div>
        <div style="left:0;top:70.500px;width:101px;text-align:center;color:#f1f4f9;font-size:5px;line-height:6px;font-weight:bold">Reinigungsvertrag</div>
        <div style="left:14px;top:34px;font-size:3.100px;line-height:4px;font-weight:bold;color:#222">Sample Document / Beispiel-Dokument</div>
        <svg class="abs" style="left:86px;top:2px" width="16" height="16" viewBox="0 0 16 16"><circle cx="8" cy="8" r="6.500" fill="#e4e8e8" stroke="#8f9a9a" stroke-width="0.800"/><path d="M8 1.500V14.500M1.500 8H14.500M3.500 3.500C6 6 10 6 12.500 3.500" fill="none" stroke="#8f9a9a" stroke-width="0.600"/></svg>
        <div style="left:80px;top:7px;font-size:4.600px;line-height:6px;font-weight:bold;color:#333">Unlimited Inc.</div>
        <div style="left:14px;top:151.500px;font-size:2.600px;line-height:3px;color:#444">Date / Datum: 09.09.2771</div>
        <div style="left:14px;top:155px;font-size:2.600px;line-height:3px;color:#444">Reference: &nbsp;&nbsp;&nbsp;DOCS-123-55586</div>
        <div style="left:77px;top:143px;width:51px;text-align:center;font-size:2.600px;line-height:3.200px;color:#333;white-space:normal"><b>Unlimited Inc.</b><br>Imperial Boulevard<br>Big City, Anywhere<br>555-667778</div>
        <div style="left:77px;top:159px;width:51px;text-align:center;font-size:2.600px;line-height:3.400px;color:#333;white-space:normal">● +49 (0)171 123 45665<br>www.unlimited.inc</div>
      </div>
    </div>
  </div>
  <!-- window borders -->
  <div class="abs" style="left:0;top:0;width:1.300px;height:563px;background:#0063b1"></div>
  <div class="abs" style="left:1428.500px;top:0;width:1.500px;height:563px;background:#0063b1"></div>
  <div class="abs" style="left:0;top:561.500px;width:1430px;height:1.500px;background:#0063b1"></div>
</div>
</body>
</html>
